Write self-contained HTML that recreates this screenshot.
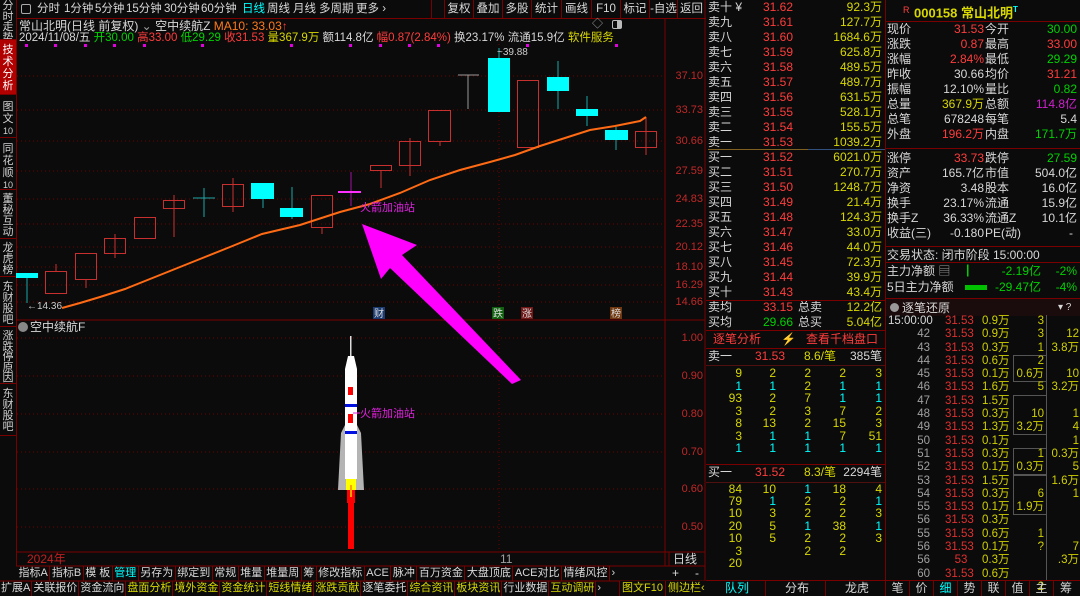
<!DOCTYPE html>
<html><head><meta charset="utf-8"><style>
*{margin:0;padding:0;box-sizing:border-box}
body{width:1080px;height:596px;background:#0b0b0b;overflow:hidden;position:relative;font-family:"Liberation Sans","Noto Sans CJK SC",sans-serif;font-size:12px;color:#d0d0d0}
.a{position:absolute;white-space:nowrap;line-height:14px}
.r{color:#ff3c3c}.g{color:#00d200}.y{color:#d8d800}.c{color:#00ffff}.w{color:#d8d8d8}.m{color:#e020e0}.o{color:#ff7a1a}.gr{color:#a0a0a0}.p{color:#d020d0}
.hl{position:absolute;height:1px;background:#7a0000}
.vl{position:absolute;width:1px;background:#7a0000}
.side{position:absolute;left:0;width:16px;border-bottom:1px solid #7a0000;text-align:center;font-size:11px;line-height:10.5px;color:#d0d0d0;padding-top:1px;overflow:hidden}
.bar{position:absolute;display:flex;height:15px;line-height:15px;white-space:nowrap}
.bar span{padding:0 2px;border-right:1px solid #7a0000}
.b2 span{padding:0 1px}
.b1 span{padding:0 1.5px}
.tb{position:absolute;top:0;height:18px;line-height:18px;text-align:center;border-left:1px solid #7a0000;font-size:11.5px}
.ob div{position:absolute;left:708px;width:176px;height:15px;line-height:15px}
.ob b{font-weight:normal;position:absolute}
.inf div{position:absolute;left:887px;width:192px;height:15px;line-height:15px}
.inf b{font-weight:normal;position:absolute}
.q{position:absolute;width:30px;text-align:right;line-height:12px}
</style></head><body>

<div class="vl" style="left:16px;top:0;height:566px"></div>
<div class="side" style="top:0;height:40px">分<br>时<br>走<br>势</div>
<div class="side" style="top:40px;height:55px;background:#b00000;color:#fff;padding-top:4px;line-height:12px">技<br>术<br>分<br>析</div>
<div class="side" style="top:98px;height:40px;padding-top:3px;line-height:12px">图<br>文<br><span style="font-size:9px">10</span></div>
<div class="side" style="top:140px;height:50px;padding-top:3px;line-height:12px">同<br>花<br>顺<br><span style="font-size:9px">10</span></div>
<div class="side" style="top:191px;height:48px;padding-top:3px;line-height:11px">董<br>秘<br>互<br>动</div>
<div class="side" style="top:241px;height:36px;padding-top:2px;line-height:11px">龙<br>虎<br>榜</div>
<div class="side" style="top:279px;height:48px;padding-top:3px;line-height:11px">东<br>财<br>股<br>吧</div>
<div class="side" style="top:330px;height:54px;line-height:10.5px">涨<br>跌<br>停<br>原<br>因</div>
<div class="side" style="top:386px;height:50px;padding-top:3px;line-height:11px">东<br>财<br>股<br>吧</div>

<div class="hl" style="left:16px;top:18px;width:690px"></div>
<div class="a" style="left:21px;top:4px;width:10px;height:10px;border:1px solid #aaa;border-radius:2px"></div>
<div style="font-size:11.5px">
<div class="a w" style="left:37px;top:2px">分时</div>
<div class="a w" style="left:64px;top:2px">1分钟</div>
<div class="a w" style="left:95px;top:2px">5分钟</div>
<div class="a w" style="left:126px;top:2px">15分钟</div>
<div class="a w" style="left:164px;top:2px">30分钟</div>
<div class="a w" style="left:201px;top:2px">60分钟</div>
<div class="a c" style="left:242px;top:2px">日线</div>
<div class="a w" style="left:267px;top:2px">周线</div>
<div class="a w" style="left:293px;top:2px">月线</div>
<div class="a w" style="left:319px;top:2px">多周期</div>
<div class="a w" style="left:356px;top:2px">更多 ›</div>
</div>
<div class="tb w" style="left:431px;width:13px"></div>
<div class="tb w" style="left:444px;width:29px">复权</div>
<div class="tb w" style="left:473px;width:29px">叠加</div>
<div class="tb w" style="left:502px;width:29px">多股</div>
<div class="tb w" style="left:531px;width:30px">统计</div>
<div class="tb w" style="left:561px;width:30px">画线</div>
<div class="tb w" style="left:591px;width:29px">F10</div>
<div class="tb w" style="left:620px;width:29px">标记</div>
<div class="tb w" style="left:649px;width:28px">-自选</div>
<div class="tb w" style="left:677px;width:28px">返回</div>

<div class="a w" style="left:19px;top:19px">常山北明(日线 前复权) <span class="gr">⌄</span> 空中续航Z <span class="o">MA10: 33.03</span><span class="r">↑</span></div>
<div class="a" style="left:19px;top:31px;font-size:11.5px"><span class="w">2024/11/08/五</span> <span class="g">开30.00</span> <span class="r">高33.00</span> <span class="g">低29.29</span> <span class="r">收31.53</span> <span class="y">量367.9万</span> <span class="w">额114.8亿</span> <span class="r">幅0.87(2.84%)</span> <span class="w">换23.17% 流通15.9亿</span> <span class="y">软件服务</span></div>
<div class="a gr" style="left:592px;top:17px;font-size:11px">◇</div>
<div class="a" style="left:612px;top:20px;width:10px;height:9px;border:1px solid #bbb;border-radius:2px;background:linear-gradient(90deg,#0b0b0b 50%,#bbb 50%)"></div>

<svg class="a" style="left:0;top:0" width="710" height="596">
<g fill="#e000e0">
<rect x="25" y="44" width="3" height="3"/><rect x="54" y="44" width="3" height="3"/><rect x="84" y="44" width="3" height="3"/><rect x="113" y="44" width="3" height="3"/><rect x="143" y="44" width="3" height="3"/><rect x="201" y="44" width="3" height="3"/><rect x="290" y="44" width="3" height="3"/><rect x="349" y="44" width="3" height="3"/><rect x="379" y="44" width="3" height="3"/><rect x="408" y="44" width="3" height="3"/><rect x="437" y="44" width="3" height="3"/><rect x="526" y="44" width="3" height="3"/><rect x="615" y="44" width="3" height="3"/></g>
<g stroke="#6a0000" stroke-dasharray="1 3">
<line x1="17" y1="76" x2="665" y2="76"/><line x1="17" y1="110" x2="665" y2="110"/><line x1="17" y1="141" x2="665" y2="141"/><line x1="17" y1="171" x2="665" y2="171"/><line x1="17" y1="199" x2="665" y2="199"/><line x1="17" y1="224" x2="665" y2="224"/><line x1="17" y1="247" x2="665" y2="247"/><line x1="17" y1="267" x2="665" y2="267"/><line x1="17" y1="285" x2="665" y2="285"/><line x1="17" y1="302" x2="665" y2="302"/>
<line x1="17" y1="338" x2="665" y2="338"/><line x1="17" y1="376" x2="665" y2="376"/><line x1="17" y1="414" x2="665" y2="414"/><line x1="17" y1="452" x2="665" y2="452"/><line x1="17" y1="489" x2="665" y2="489"/><line x1="17" y1="527" x2="665" y2="527"/>
<line x1="499" y1="40" x2="499" y2="552"/>
</g>
<g stroke="#7a0000"><line x1="665" y1="18" x2="665" y2="566"/><line x1="705" y1="0" x2="705" y2="596"/><line x1="16" y1="320" x2="705" y2="320"/><line x1="16" y1="552" x2="705" y2="552"/><line x1="16" y1="566" x2="705" y2="566"/><line x1="0" y1="581" x2="705" y2="581"/><line x1="669" y1="552" x2="669" y2="566"/></g>
<g stroke="#1aa8a8"><line x1="27" y1="273" x2="27" y2="303"/><line x1="204" y1="188" x2="204" y2="217"/><line x1="193" y1="198" x2="215" y2="198"/><line x1="263" y1="183" x2="263" y2="208"/><line x1="292" y1="187" x2="292" y2="219"/><line x1="558" y1="61" x2="558" y2="109"/><line x1="587" y1="96" x2="587" y2="126"/><line x1="616" y1="127" x2="616" y2="150"/><line x1="499" y1="48" x2="499" y2="60"/></g>
<g fill="#00ffff"><rect x="16" y="273" width="22" height="5"/><rect x="251" y="183" width="23" height="16"/><rect x="280" y="208" width="23" height="9"/><rect x="488" y="58" width="22" height="54"/><rect x="547" y="77" width="22" height="14"/><rect x="576" y="109" width="22" height="7"/><rect x="605" y="130" width="23" height="10"/></g>
<g stroke="#c83030" fill="none">
<line x1="56" y1="264" x2="56" y2="271"/><rect x="45.5" y="271.5" width="21" height="22"/>
<line x1="86" y1="280" x2="86" y2="288"/><rect x="75.5" y="253.5" width="21" height="26"/>
<line x1="115" y1="234" x2="115" y2="258"/><rect x="104.5" y="238.5" width="21" height="15"/>
<rect x="134.5" y="217.5" width="21" height="21"/>
<line x1="174" y1="195" x2="174" y2="237"/><rect x="163.5" y="200.5" width="21" height="8"/>
<line x1="233" y1="178" x2="233" y2="212"/><rect x="222.5" y="184.5" width="21" height="22"/>
<line x1="322" y1="228" x2="322" y2="234"/><rect x="311.5" y="195.5" width="21" height="32"/>
<line x1="381" y1="170" x2="381" y2="188"/><rect x="370.5" y="165.5" width="21" height="5"/>
<line x1="410" y1="138" x2="410" y2="176"/><rect x="399.5" y="141.5" width="21" height="24"/>
<line x1="440" y1="142" x2="440" y2="146"/><rect x="428.5" y="110.5" width="22" height="31"/>
<rect x="517.5" y="80.5" width="21" height="67"/>
<line x1="646" y1="117" x2="646" y2="155"/><rect x="635.5" y="131.5" width="21" height="16"/>
</g>
<g stroke="#999"><line x1="468" y1="75" x2="468" y2="109"/><line x1="458" y1="75" x2="479" y2="75"/></g>
<g stroke="#a010a0"><line x1="351" y1="172" x2="351" y2="206"/></g>
<line x1="338" y1="192" x2="361" y2="192" stroke="#ff30ff" stroke-width="2"/>
<polyline fill="none" stroke="#ff6a14" stroke-width="2" points="62,308 80,303 100,297 125,289 150,279 175,269 200,259 230,247 262,234 300,225 340,212 370,204 400,193 430,180 460,170 490,162 515,155 540,146 565,138 590,130 615,126 640,121 646,117"/>
<text x="27" y="309" fill="#ccc" font-size="10" font-family="Liberation Sans">←14.36</text>
<text x="497" y="55" fill="#ccc" font-size="10" font-family="Liberation Sans">~39.88</text>
<text x="360" y="211" fill="#e020e0" font-size="11" font-family="Liberation Sans,Noto Sans CJK SC">火箭加油站</text>
<polygon fill="#ff00ff" points="362,224 417,245 402,255 521,380 512,384 390,268 381,279"/>
<rect x="373" y="307" width="12" height="12" fill="#1a3a70"/><text x="374" y="317" fill="#ddd" font-size="10" font-family="Noto Sans CJK SC">财</text>
<rect x="492" y="307" width="12" height="12" fill="#106010"/><text x="493" y="317" fill="#ddd" font-size="10" font-family="Noto Sans CJK SC">跌</text>
<rect x="521" y="307" width="12" height="12" fill="#701818"/><text x="522" y="317" fill="#ddd" font-size="10" font-family="Noto Sans CJK SC">涨</text>
<rect x="610" y="307" width="12" height="12" fill="#703810"/><text x="611" y="317" fill="#ddd" font-size="10" font-family="Noto Sans CJK SC">榜</text>
<rect x="350" y="336" width="1.5" height="20" fill="#ddd"/>
<polygon points="348,356 354,356 357,369 345,369" fill="#fff"/>
<rect x="345" y="369" width="12" height="110" fill="#fff"/>
<polygon points="341,433 345,425 357,425 361,433 364,490 338,490" fill="#b4b4b4"/>
<rect x="345" y="425" width="12" height="54" fill="#fff"/>
<rect x="348" y="387" width="5" height="8" fill="#f00"/><rect x="348" y="414" width="5" height="9" fill="#f00"/>
<rect x="345" y="404" width="12" height="3" fill="#0010e0"/><rect x="345" y="431" width="12" height="3" fill="#0010e0"/>
<rect x="346" y="479" width="10" height="11" fill="#ffff00"/>
<rect x="347" y="490" width="8" height="13" fill="#f00"/><rect x="350" y="485" width="2" height="12" fill="#ffa000"/>
<rect x="348" y="503" width="6" height="46" fill="#f00"/>
<text x="360" y="417" fill="#e020e0" font-size="11" font-family="Liberation Sans,Noto Sans CJK SC">火箭加油站</text>
<line x1="353" y1="413" x2="360" y2="413" stroke="#e020e0"/>
<circle cx="23" cy="327" r="5" fill="#888"/>
</svg>
<div class="a w" style="left:30px;top:320px">空中续航F</div>

<div style="font-size:11px;color:#c02828">
<div class="a" style="left:666px;top:69px;width:37px;text-align:right">37.10</div>
<div class="a" style="left:666px;top:103px;width:37px;text-align:right">33.73</div>
<div class="a" style="left:666px;top:134px;width:37px;text-align:right">30.66</div>
<div class="a" style="left:666px;top:164px;width:37px;text-align:right">27.59</div>
<div class="a" style="left:666px;top:192px;width:37px;text-align:right">24.83</div>
<div class="a" style="left:666px;top:217px;width:37px;text-align:right">22.35</div>
<div class="a" style="left:666px;top:240px;width:37px;text-align:right">20.12</div>
<div class="a" style="left:666px;top:260px;width:37px;text-align:right">18.10</div>
<div class="a" style="left:666px;top:278px;width:37px;text-align:right">16.29</div>
<div class="a" style="left:666px;top:295px;width:37px;text-align:right">14.66</div>
<div class="a" style="left:666px;top:331px;width:37px;text-align:right">1.00</div>
<div class="a" style="left:666px;top:369px;width:37px;text-align:right">0.90</div>
<div class="a" style="left:666px;top:407px;width:37px;text-align:right">0.80</div>
<div class="a" style="left:666px;top:445px;width:37px;text-align:right">0.70</div>
<div class="a" style="left:666px;top:482px;width:37px;text-align:right">0.60</div>
<div class="a" style="left:666px;top:520px;width:37px;text-align:right">0.50</div>
</div>

<div class="a" style="left:27px;top:552px;color:#c02020">2024年</div>
<div class="a gr" style="left:500px;top:552px">11</div>
<div class="a w" style="left:673px;top:552px">日线</div>

<div class="bar w b1" style="left:17px;top:566px;font-size:11px"><span>指标A</span><span>指标B</span><span>模 板</span><span class="c">管理</span><span>另存为</span><span>绑定到</span><span>常规</span><span>堆量</span><span>堆量周</span><span>筹</span><span>修改指标</span><span>ACE</span><span>脉冲</span><span>百万资金</span><span>大盘顶底</span><span>ACE对比</span><span>情绪风控</span><span style="border:0">›</span></div>
<div class="a w" style="left:672px;top:566px">+</div><div class="a w" style="left:695px;top:566px">-</div>
<div class="bar b2" style="left:0;top:581px;font-size:11px"><span class="w">扩展A</span><span class="w">关联报价</span><span class="w">资金流向</span><span class="y">盘面分析</span><span class="y">境外资金</span><span class="y">资金统计</span><span class="y">短线情绪</span><span class="y">涨跌贡献</span><span class="w">逐笔委托</span><span class="y">综合资讯</span><span class="y">板块资讯</span><span class="w">行业数据</span><span class="y">互动调研</span><span class="w" style="border:0">›</span></div>
<div class="bar y" style="left:619px;top:581px;font-size:11px;border-left:1px solid #7a0000;background:#0b0b0b"><span>图文F10</span><span style="border:0">侧边栏‹</span></div>

<div class="vl" style="left:885px;top:0;height:596px"></div>
<div class="ob">
<div style="top:0"><b class="w">卖十 ¥</b><b class="r" style="left:55px">31.62</b><b class="y" style="right:2px">92.3万</b></div>
<div style="top:15px"><b class="w">卖九</b><b class="r" style="left:55px">31.61</b><b class="y" style="right:2px">127.7万</b></div>
<div style="top:30px"><b class="w">卖八</b><b class="r" style="left:55px">31.60</b><b class="y" style="right:2px">1684.6万</b></div>
<div style="top:45px"><b class="w">卖七</b><b class="r" style="left:55px">31.59</b><b class="y" style="right:2px">625.8万</b></div>
<div style="top:60px"><b class="w">卖六</b><b class="r" style="left:55px">31.58</b><b class="y" style="right:2px">489.5万</b></div>
<div style="top:75px"><b class="w">卖五</b><b class="r" style="left:55px">31.57</b><b class="y" style="right:2px">489.7万</b></div>
<div style="top:90px"><b class="w">卖四</b><b class="r" style="left:55px">31.56</b><b class="y" style="right:2px">631.5万</b></div>
<div style="top:105px"><b class="w">卖三</b><b class="r" style="left:55px">31.55</b><b class="y" style="right:2px">528.1万</b></div>
<div style="top:120px"><b class="w">卖二</b><b class="r" style="left:55px">31.54</b><b class="y" style="right:2px">155.5万</b></div>
<div style="top:135px"><b class="w">卖一</b><b class="r" style="left:55px">31.53</b><b class="y" style="right:2px">1039.2万</b></div>
<div style="top:150px"><b class="w">买一</b><b class="r" style="left:55px">31.52</b><b class="y" style="right:2px">6021.0万</b></div>
<div style="top:165px"><b class="w">买二</b><b class="r" style="left:55px">31.51</b><b class="y" style="right:2px">270.7万</b></div>
<div style="top:180px"><b class="w">买三</b><b class="r" style="left:55px">31.50</b><b class="y" style="right:2px">1248.7万</b></div>
<div style="top:195px"><b class="w">买四</b><b class="r" style="left:55px">31.49</b><b class="y" style="right:2px">21.4万</b></div>
<div style="top:210px"><b class="w">买五</b><b class="r" style="left:55px">31.48</b><b class="y" style="right:2px">124.3万</b></div>
<div style="top:225px"><b class="w">买六</b><b class="r" style="left:55px">31.47</b><b class="y" style="right:2px">33.0万</b></div>
<div style="top:240px"><b class="w">买七</b><b class="r" style="left:55px">31.46</b><b class="y" style="right:2px">44.0万</b></div>
<div style="top:255px"><b class="w">买八</b><b class="r" style="left:55px">31.45</b><b class="y" style="right:2px">72.3万</b></div>
<div style="top:270px"><b class="w">买九</b><b class="r" style="left:55px">31.44</b><b class="y" style="right:2px">39.9万</b></div>
<div style="top:285px"><b class="w">买十</b><b class="r" style="left:55px">31.43</b><b class="y" style="right:2px">43.4万</b></div>
<div style="top:300px"><b class="w">卖均</b><b class="r" style="left:55px">33.15</b><b class="w" style="left:90px">总卖</b><b class="y" style="right:2px">12.2亿</b></div>
<div style="top:315px"><b class="w">买均</b><b class="g" style="left:55px">29.66</b><b class="w" style="left:90px">总买</b><b class="y" style="right:2px">5.04亿</b></div>
<div style="top:332px"><b class="r" style="left:5px">逐笔分析</b><b style="left:73px;color:#b08000">⚡</b><b class="r" style="left:98px">查看千档盘口</b></div>
<div style="top:349px"><b class="w">卖一</b><b class="r" style="left:47px">31.53</b><b class="y" style="left:96px">8.6/笔</b><b class="w" style="right:2px">385笔</b></div>
<div style="top:465px"><b class="w">买一</b><b class="r" style="left:47px">31.52</b><b class="y" style="left:96px">8.3/笔</b><b class="w" style="right:2px">2294笔</b></div>
</div>
<div class="hl" style="left:708px;top:149px;width:100px;background:#806020"></div>
<div class="hl" style="left:808px;top:149px;width:77px;background:#305080"></div>
<div class="hl" style="left:706px;top:300px;width:179px"></div>
<div class="hl" style="left:706px;top:330px;width:179px"></div>
<div class="hl" style="left:706px;top:348px;width:179px"></div>
<div class="hl" style="left:706px;top:365px;width:179px;background:#501010"></div>
<div class="hl" style="left:706px;top:464px;width:179px"></div>
<div class="hl" style="left:706px;top:482px;width:179px;background:#501010"></div>

<div style="position:absolute;left:0;top:0;font-size:12px">
<div class="q y" style="left:712px;top:367px">9</div><div class="q y" style="left:746px;top:367px">2</div><div class="q y" style="left:781px;top:367px">2</div><div class="q y" style="left:816px;top:367px">2</div><div class="q y" style="left:852px;top:367px">3</div>
<div class="q c" style="left:712px;top:380px">1</div><div class="q c" style="left:746px;top:380px">1</div><div class="q y" style="left:781px;top:380px">2</div><div class="q c" style="left:816px;top:380px">1</div><div class="q c" style="left:852px;top:380px">1</div>
<div class="q y" style="left:712px;top:392px">93</div><div class="q y" style="left:746px;top:392px">2</div><div class="q y" style="left:781px;top:392px">7</div><div class="q c" style="left:816px;top:392px">1</div><div class="q c" style="left:852px;top:392px">1</div>
<div class="q y" style="left:712px;top:405px">3</div><div class="q y" style="left:746px;top:405px">2</div><div class="q y" style="left:781px;top:405px">3</div><div class="q y" style="left:816px;top:405px">7</div><div class="q y" style="left:852px;top:405px">2</div>
<div class="q y" style="left:712px;top:417px">8</div><div class="q y" style="left:746px;top:417px">13</div><div class="q y" style="left:781px;top:417px">2</div><div class="q y" style="left:816px;top:417px">15</div><div class="q y" style="left:852px;top:417px">3</div>
<div class="q y" style="left:712px;top:430px">3</div><div class="q c" style="left:746px;top:430px">1</div><div class="q c" style="left:781px;top:430px">1</div><div class="q y" style="left:816px;top:430px">7</div><div class="q y" style="left:852px;top:430px">51</div>
<div class="q c" style="left:712px;top:442px">1</div><div class="q c" style="left:746px;top:442px">1</div><div class="q c" style="left:781px;top:442px">1</div><div class="q c" style="left:816px;top:442px">1</div><div class="q c" style="left:852px;top:442px">1</div>
<div class="q y" style="left:712px;top:483px">84</div><div class="q y" style="left:746px;top:483px">10</div><div class="q c" style="left:781px;top:483px">1</div><div class="q y" style="left:816px;top:483px">18</div><div class="q y" style="left:852px;top:483px">4</div>
<div class="q y" style="left:712px;top:495px">79</div><div class="q c" style="left:746px;top:495px">1</div><div class="q y" style="left:781px;top:495px">2</div><div class="q y" style="left:816px;top:495px">2</div><div class="q c" style="left:852px;top:495px">1</div>
<div class="q y" style="left:712px;top:507px">10</div><div class="q y" style="left:746px;top:507px">3</div><div class="q y" style="left:781px;top:507px">2</div><div class="q y" style="left:816px;top:507px">2</div><div class="q y" style="left:852px;top:507px">3</div>
<div class="q y" style="left:712px;top:520px">20</div><div class="q y" style="left:746px;top:520px">5</div><div class="q c" style="left:781px;top:520px">1</div><div class="q y" style="left:816px;top:520px">38</div><div class="q c" style="left:852px;top:520px">1</div>
<div class="q y" style="left:712px;top:532px">10</div><div class="q y" style="left:746px;top:532px">5</div><div class="q y" style="left:781px;top:532px">2</div><div class="q y" style="left:816px;top:532px">2</div><div class="q y" style="left:852px;top:532px">3</div>
<div class="q y" style="left:712px;top:545px">3</div><div class="q y" style="left:781px;top:545px">2</div><div class="q y" style="left:816px;top:545px">2</div>
<div class="q y" style="left:712px;top:557px">20</div>
</div>
<div class="hl" style="left:706px;top:580px;width:179px"></div>
<div class="a c" style="left:725px;top:581px;line-height:15px">队列</div>
<div class="a w" style="left:785px;top:581px;line-height:15px">分布</div>
<div class="a w" style="left:845px;top:581px;line-height:15px">龙虎</div>
<div class="vl" style="left:765px;top:581px;height:15px"></div><div class="vl" style="left:825px;top:581px;height:15px"></div>

<div class="a" style="left:903px;top:3px;font-size:9px;color:#ff4040">R</div>
<div class="a y" style="left:914px;top:3px;font-size:13px;font-weight:bold">000158 常山北明<sup class="c" style="font-size:8px">T</sup></div>
<div class="hl" style="left:885px;top:21px;width:195px"></div>
<div class="inf">
<div style="top:22px"><b class="w">现价</b><b class="r" style="right:95px">31.53</b><b class="w" style="left:98px">今开</b><b class="g" style="right:2px">30.00</b></div>
<div style="top:37px"><b class="w">涨跌</b><b class="r" style="right:95px">0.87</b><b class="w" style="left:98px">最高</b><b class="r" style="right:2px">33.00</b></div>
<div style="top:52px"><b class="w">涨幅</b><b class="r" style="right:95px">2.84%</b><b class="w" style="left:98px">最低</b><b class="g" style="right:2px">29.29</b></div>
<div style="top:67px"><b class="w">昨收</b><b class="w" style="right:95px">30.66</b><b class="w" style="left:98px">均价</b><b class="r" style="right:2px">31.21</b></div>
<div style="top:82px"><b class="w">振幅</b><b class="w" style="right:95px">12.10%</b><b class="w" style="left:98px">量比</b><b class="g" style="right:2px">0.82</b></div>
<div style="top:97px"><b class="w">总量</b><b class="y" style="right:95px">367.9万</b><b class="w" style="left:98px">总额</b><b style="right:2px;color:#d020d0">114.8亿</b></div>
<div style="top:112px"><b class="w">总笔</b><b class="w" style="right:95px">678248</b><b class="w" style="left:98px">每笔</b><b class="w" style="right:2px">5.4</b></div>
<div style="top:127px"><b class="w">外盘</b><b class="r" style="right:95px">196.2万</b><b class="w" style="left:98px">内盘</b><b class="g" style="right:2px">171.7万</b></div>
<div style="top:151px"><b class="w">涨停</b><b class="r" style="right:95px">33.73</b><b class="w" style="left:98px">跌停</b><b class="g" style="right:2px">27.59</b></div>
<div style="top:166px"><b class="w">资产</b><b class="w" style="right:95px">165.7亿</b><b class="w" style="left:98px">市值</b><b class="w" style="right:2px">504.0亿</b></div>
<div style="top:181px"><b class="w">净资</b><b class="w" style="right:95px">3.48</b><b class="w" style="left:98px">股本</b><b class="w" style="right:2px">16.0亿</b></div>
<div style="top:196px"><b class="w">换手</b><b class="w" style="right:95px">23.17%</b><b class="w" style="left:98px">流通</b><b class="w" style="right:2px">15.9亿</b></div>
<div style="top:211px"><b class="w">换手Z</b><b class="w" style="right:95px">36.33%</b><b class="w" style="left:98px">流通Z</b><b class="w" style="right:2px">10.1亿</b></div>
<div style="top:226px"><b class="w">收益(三)</b><b class="w" style="right:95px">-0.180</b><b class="w" style="left:98px">PE(动)</b><b class="w" style="right:6px">-</b></div>
<div style="top:248px"><b class="w">交易状态: 闭市阶段 15:00:00</b></div>
<div style="top:264px"><b class="w">主力净额 <span class="gr">▤</span></b><b class="g" style="left:80px">▏</b><b class="g" style="right:38px">-2.19亿</b><b class="g" style="right:2px">-2%</b></div>
<div style="top:280px"><b class="w">5日主力净额</b><b style="left:78px;top:5px;width:22px;height:5px;background:#00c000"></b><b class="g" style="right:38px">-29.47亿</b><b class="g" style="right:2px">-4%</b></div>
</div>
<div class="hl" style="left:885px;top:148px;width:195px"></div>
<div class="hl" style="left:885px;top:246px;width:195px"></div>
<div class="hl" style="left:885px;top:262px;width:195px"></div>
<div class="hl" style="left:885px;top:298px;width:195px"></div>
<div class="a" style="left:886px;top:299px;width:194px;height:17px;background:#1a0c0c"></div>
<div class="a" style="left:890px;top:303px;width:9px;height:9px;border-radius:50%;background:#999"></div>
<div class="a w" style="left:902px;top:301px">逐笔还原</div>
<div class="a w" style="left:1058px;top:301px;font-size:10px">▾ ?</div>

<div style="position:absolute;left:888px;top:315px;width:42px;text-align:right;line-height:13.3px;color:#a0a0a0;font-size:11.5px"><span class="w">15:00:00</span><br>42<br>43<br>44<br>45<br>46<br>47<br>48<br>49<br>50<br>51<br>52<br>53<br>54<br>55<br>56<br>55<br>56<br>56<br>60</div>
<div style="position:absolute;left:945px;top:315px;line-height:13.3px;color:#e03030;font-size:11.5px">31.53<br>31.53<br>31.53<br>31.53<br>31.53<br>31.53<br>31.53<br>31.53<br>31.53<br>31.53<br>31.53<br>31.53<br>31.53<br>31.53<br>31.53<br>31.53<br>31.53<br>31.53<br>&nbsp;&nbsp;&nbsp;53<br>31.53</div>
<div style="position:absolute;left:982px;top:315px;line-height:13.3px;color:#d0d000;font-size:11.5px">0.9万<br>0.9万<br>0.3万<br>0.6万<br>0.1万<br>1.6万<br>1.5万<br>0.3万<br>1.3万<br>0.1万<br>0.3万<br>0.1万<br>1.5万<br>0.3万<br>0.1万<br>0.3万<br>0.6万<br>0.1万<br>0.3万<br>0.6万</div>
<div class="a" style="left:1013px;top:355px;width:33px;height:27px;border:1px solid #555;border-right:0"></div>
<div class="a" style="left:1013px;top:395px;width:33px;height:40px;border:1px solid #555;border-right:0"></div>
<div class="a" style="left:1013px;top:448px;width:33px;height:27px;border:1px solid #555;border-right:0"></div>
<div class="a" style="left:1013px;top:475px;width:33px;height:40px;border:1px solid #555;border-right:0"></div>
<div class="vl" style="left:1046px;top:315px;height:265px;background:#555"></div>
<div style="position:absolute;left:1010px;top:315px;width:34px;text-align:right;line-height:13.3px;color:#d0d000;font-size:11.5px">3<br>3<br>1<br>2<br>0.6万<br>5<br><br>10<br>3.2万<br><br>1<br>0.3万<br><br>6<br>1.9万<br><br>1<br>?<br><br><br>2</div>
<div style="position:absolute;left:1046px;top:315px;width:33px;text-align:right;line-height:13.3px;color:#d0d000;font-size:11.5px"><br>12<br>3.8万<br><br>10<br>3.2万<br><br>1<br>4<br>1<br>0.3万<br>5<br>1.6万<br>1<br><br><br><br>7<br>.3万</div>
<div class="hl" style="left:885px;top:580px;width:195px"></div>
<div style="position:absolute;left:886px;top:581px;display:flex;line-height:15px">
<span style="width:24px;text-align:center;border-right:1px solid #7a0000">笔</span><span style="width:24px;text-align:center;border-right:1px solid #7a0000">价</span><span class="c" style="width:24px;text-align:center;border-right:1px solid #7a0000">细</span><span style="width:24px;text-align:center;border-right:1px solid #7a0000">势</span><span style="width:24px;text-align:center;border-right:1px solid #7a0000">联</span><span style="width:24px;text-align:center;border-right:1px solid #7a0000">值</span><span style="width:24px;text-align:center;border-right:1px solid #7a0000">主</span><span style="width:24px;text-align:center">筹</span></div>
</body></html>
